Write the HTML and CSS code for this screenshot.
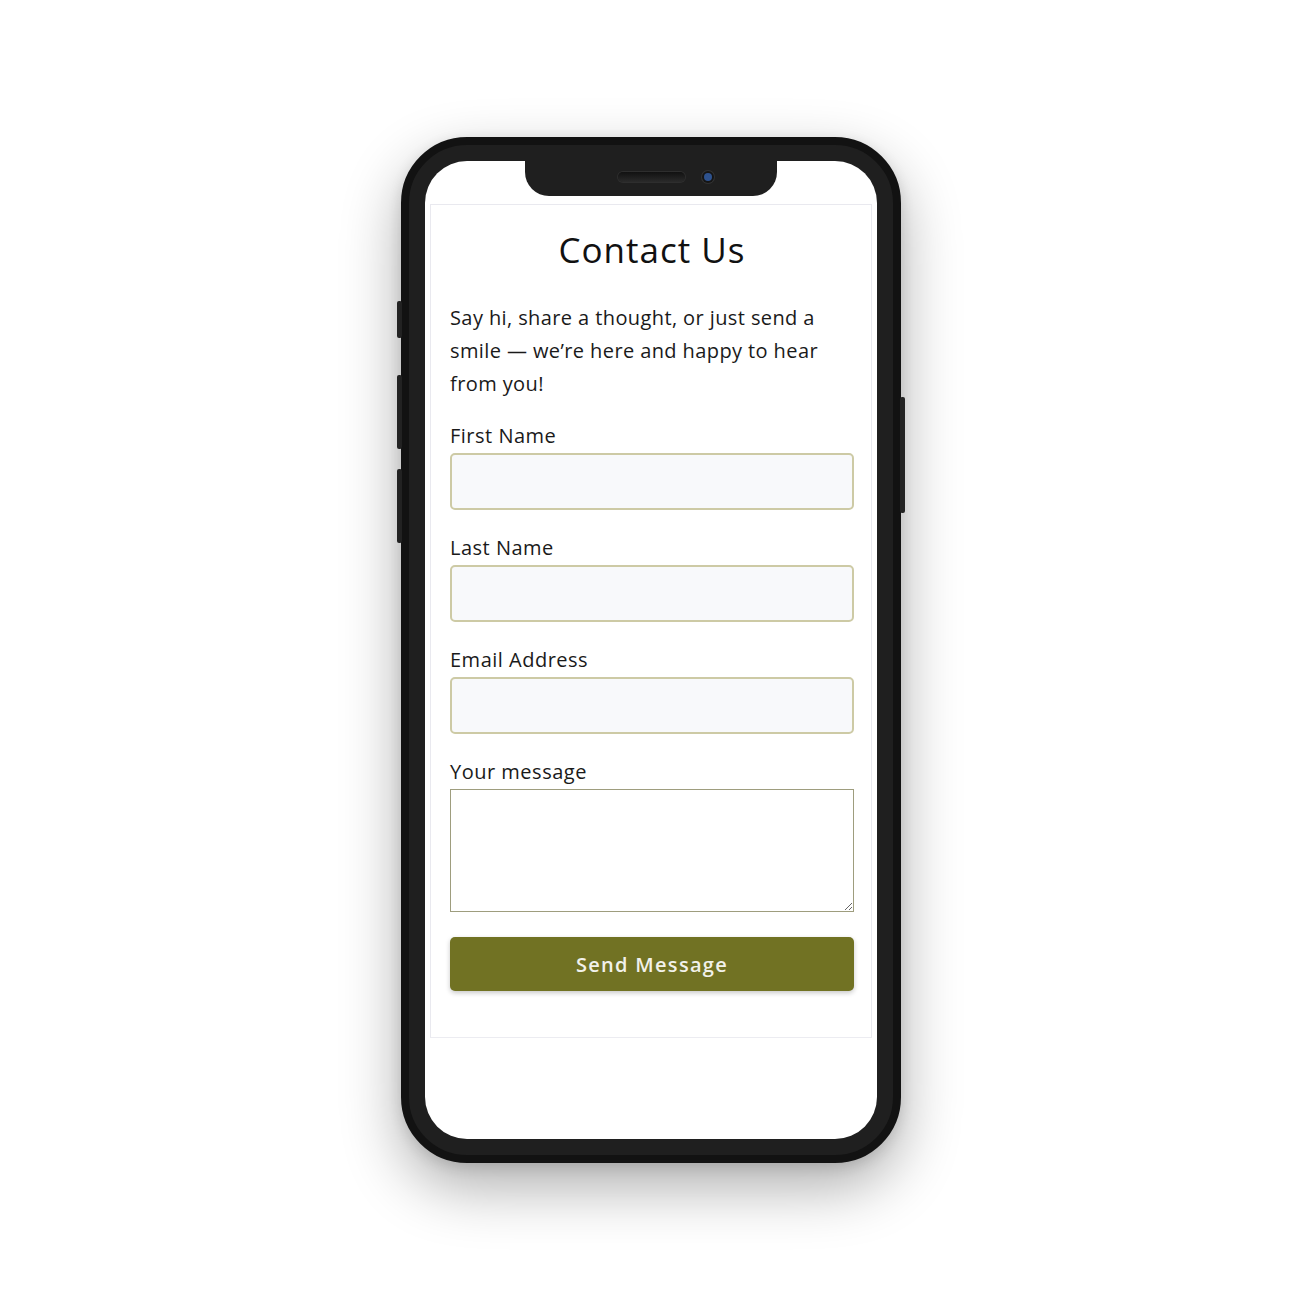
FILE: index.html
```html
<!DOCTYPE html>
<html lang="en">
<head>
<meta charset="utf-8">
<title>Contact Us</title>
<link rel="stylesheet" href="styles.css">
</head>
<body>
<div class="stage">
  <div class="device">
    <span class="side-btn side-btn--mute"></span>
    <span class="side-btn side-btn--vol-up"></span>
    <span class="side-btn side-btn--vol-down"></span>
    <span class="side-btn side-btn--power"></span>
    <div class="phone">
      <div class="screen">
        <div class="notch">
          <span class="speaker"></span>
          <span class="camera"></span>
        </div>
        <div class="card">
          <h1 class="title">Contact Us</h1>
          <p class="intro">Say hi, share a thought, or just send a smile — we’re here and happy to hear from you!</p>
          <form class="form">
            <div class="field">
              <label class="label" for="first">First Name</label>
              <input class="input" id="first" type="text">
            </div>
            <div class="field">
              <label class="label" for="last">Last Name</label>
              <input class="input" id="last" type="text">
            </div>
            <div class="field">
              <label class="label" for="email">Email Address</label>
              <input class="input" id="email" type="email">
            </div>
            <div class="field">
              <label class="label" for="msg">Your message</label>
              <textarea class="textarea" id="msg"></textarea>
            </div>
            <button class="submit" type="button">Send Message</button>
          </form>
        </div>
      </div>
    </div>
  </div>
</div>
</body>
</html>
```

FILE: styles.css
```css
* { box-sizing: border-box; }
html, body { margin: 0; padding: 0; background: #ffffff; }
body { font-family: "Open Sans", "Lato", sans-serif; color: #161616; }

.stage {
  width: 1300px;
  height: 1300px;
  display: flex;
  align-items: center;
  justify-content: center;
  padding-left: 2px;
}

.device {
  position: relative;
  width: 500px;
  height: 1026px;
}

.phone {
  width: 100%;
  height: 100%;
  background: #1f1f1f;
  border: 8px solid #121212;
  border-radius: 66px;
  padding: 16px;
  box-shadow: 0 24px 60px rgba(0, 0, 0, 0.32), 0 4px 14px rgba(0, 0, 0, 0.12);
}

.side-btn {
  position: absolute;
  width: 5px;
  background: #222222;
  border-radius: 2px;
}
.side-btn--mute { left: -4px; top: 164px; height: 37px; }
.side-btn--vol-up { left: -4px; top: 238px; height: 74px; }
.side-btn--vol-down { left: -4px; top: 332px; height: 74px; }
.side-btn--power { right: -4px; top: 260px; height: 116px; }

.screen {
  position: relative;
  width: 100%;
  height: 100%;
  background: #ffffff;
  border-radius: 42px;
  overflow: hidden;
  padding: 43px 5px 0 5px;
}

.notch {
  position: absolute;
  top: 0;
  left: 100px;
  width: 252px;
  height: 35px;
  background: #1f1f1f;
  border-radius: 0 0 24px 24px;
  display: flex;
  align-items: center;
  padding: 0 0 4px 93px;
  gap: 19px;
}
.speaker {
  width: 67px;
  height: 10px;
  border-radius: 5px;
  background: linear-gradient(#111111, #2a2a2a);
  box-shadow: 0 0 0 1px #2e2e2e;
}
.camera {
  width: 8px;
  height: 8px;
  border-radius: 50%;
  background: #2e528e;
  box-shadow: 0 0 0 2px #151515, 0 0 0 3px #333333;
}

.card {
  border: 1px solid #e9e9ef;
  border-bottom: 1px solid #ececf1;
  padding: 25px 17px 46px 19px;
}

.title {
  margin: 0;
  text-align: center;
  font-size: 35px;
  line-height: 40px;
  font-weight: 400;
  color: #111111;
  letter-spacing: 1px;
}

.intro {
  margin: 31px 0 24px 0;
  font-size: 20px;
  line-height: 33px;
  color: #1a1a1a;
  letter-spacing: 0.4px;
}

.form { display: flex; flex-direction: column; }

.field {
  display: flex;
  flex-direction: column;
  margin-bottom: 26px;
}
.field:last-of-type { margin-bottom: 25px; }

.label {
  font-size: 20px;
  line-height: 24px;
  margin-bottom: 5px;
  color: #1a1a1a;
  letter-spacing: 0.5px;
}

.input {
  height: 57px;
  width: 100%;
  background: #f8f9fb;
  border: 2px solid #cdcaa5;
  border-radius: 5px;
  font: inherit;
}

.textarea {
  height: 123px;
  width: 100%;
  background: #ffffff;
  border: 1.5px solid #9e9d7e;
  border-radius: 0;
  font: inherit;
  resize: vertical;
  margin: 0;
}

.submit {
  height: 54px;
  width: 100%;
  background: #717223;
  color: #f1f1ea;
  border: none;
  border-radius: 5px;
  font-family: inherit;
  font-size: 20px;
  font-weight: 600;
  letter-spacing: 1.3px;
  box-shadow: 0 2px 5px rgba(0, 0, 0, 0.22);
}
```
